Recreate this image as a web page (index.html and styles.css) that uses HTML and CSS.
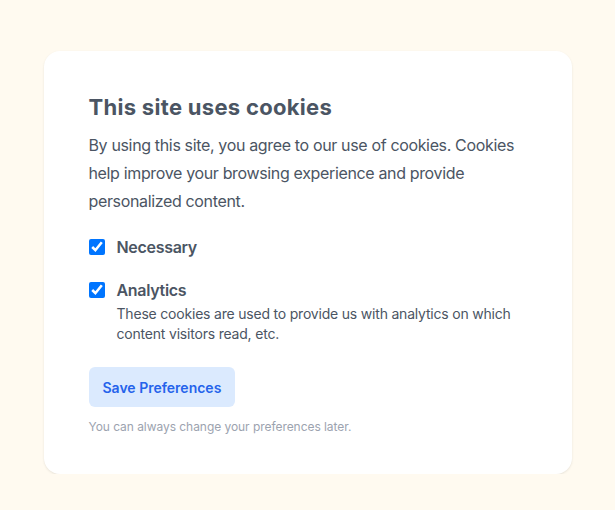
FILE: index.html
```html
<!DOCTYPE html>
<html lang="en">
<head>
<meta charset="utf-8">
<title>Cookies</title>
<link rel="stylesheet" href="styles.css">
</head>
<body>
<main class="page">
  <section class="card">
    <h1 class="title">This site uses cookies</h1>
    <p class="intro">By using this site, you agree to our use of cookies. Cookies help improve your browsing experience and provide personalized content.</p>
    <div class="options">
      <label class="option">
        <input type="checkbox" class="check" checked>
        <span class="option-body">
          <span class="option-name">Necessary</span>
        </span>
      </label>
      <label class="option">
        <input type="checkbox" class="check" checked>
        <span class="option-body">
          <span class="option-name">Analytics</span>
          <span class="option-desc">These cookies are used to provide us with analytics on which content visitors read, etc.</span>
        </span>
      </label>
    </div>
    <button class="save" type="button">Save Preferences</button>
    <p class="note">You can always change your preferences later.</p>
  </section>
</main>
</body>
</html>
```

FILE: styles.css
```css
html, body {
  margin: 0;
  padding: 0;
}
body {
  background: #fffaf0;
  font-family: Inter, "Noto Sans", sans-serif;
  color: #4b5563;
}
.page {
  display: flex;
  justify-content: center;
  padding-top: 51px;
}
.card {
  width: 528px;
  box-sizing: border-box;
  background: #ffffff;
  border-radius: 16px;
  padding: 40px 46px 39px 45px;
  box-shadow: 0 1px 3px rgba(0,0,0,0.06), 0 1px 2px rgba(0,0,0,0.04);
}
.title {
  margin: 0;
  font-size: 22px;
  line-height: 32px;
  font-weight: 700;
  letter-spacing: 0.3px;
  color: #4b5563;
}
.intro {
  margin: 8px 0 0;
  font-size: 16px;
  line-height: 28px;
  letter-spacing: -0.35px;
}
.options {
  display: flex;
  flex-direction: column;
  gap: 19px;
  margin-top: 20px;
}
.option {
  display: flex;
  align-items: flex-start;
  gap: 12px;
}
.check {
  width: 16px;
  height: 16px;
  margin: 4px 0 0;
  flex: none;
}
.option-body {
  display: flex;
  flex-direction: column;
}
.option-name {
  font-size: 16px;
  line-height: 24px;
  font-weight: 600;
  letter-spacing: -0.3px;
}
.option-desc {
  margin-top: 2px;
  font-size: 14px;
  line-height: 20px;
  letter-spacing: -0.2px;
}
.save {
  align-self: flex-start;
  margin-top: 23px;
  height: 40px;
  padding: 0 14px;
  border: 0;
  border-radius: 6px;
  background: #dbeafe;
  color: #2563eb;
  font-family: inherit;
  font-size: 14px;
  font-weight: 600;
}
.note {
  margin: 12px 0 0;
  font-size: 12px;
  line-height: 16px;
  letter-spacing: -0.05px;
  color: #9ca3af;
}
```
